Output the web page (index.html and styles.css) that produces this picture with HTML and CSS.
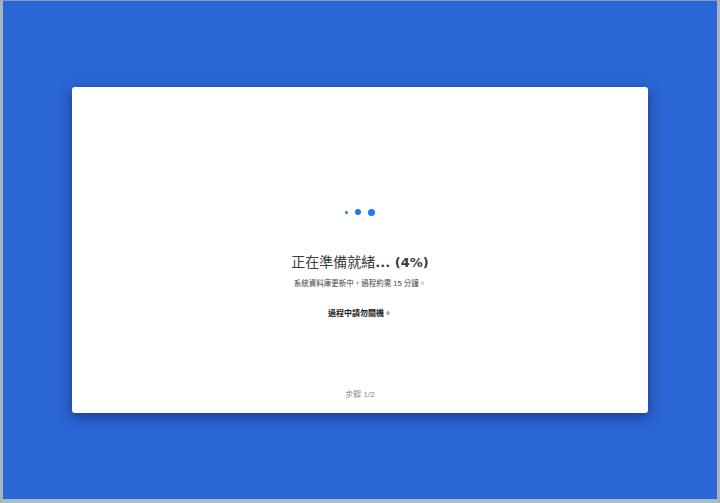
FILE: index.html
```html
<!DOCTYPE html>
<html lang="zh-Hant">
<head>
    <meta charset="UTF-8">
    <meta name="viewport" content="width=device-width, initial-scale=1.0">
    <title>正在準備就緒</title>
    <link rel="stylesheet" href="styles.css">
</head>
<body>

<div class="frame">
    <div class="card">
        <div class="dots">
            <span class="dot dot-sm"></span>
            <span class="dot dot-md"></span>
            <span class="dot dot-lg"></span>
        </div>
        <h1 class="title">正在準備就緒<b>... (4%)</b></h1>
        <p class="desc">系統資料庫更新中，過程約需 15 分鐘。</p>
        <p class="warn">過程中請勿關機。</p>
        <p class="step">步驟 1/2</p>
    </div>
</div>

</body>
</html>
```

FILE: styles.css
```css
html, body {
    margin: 0;
    height: 100%;
}
body {
    font-family: "Liberation Sans", "Noto Sans CJK TC", sans-serif;
    background: #9aa6b4;
}
.frame {
    box-sizing: border-box;
    height: 100%;
    background: #2b66d6;
    border-top: 1px solid #8e9bb0;
    border-left: 3px solid #a9b4c2;
    border-right: 3px solid #a9b4c2;
    border-bottom: 4px solid #a9bccc;
    display: flex;
    align-items: center;
    justify-content: center;
}
.card {
    box-sizing: border-box;
    width: 576px;
    height: 326px;
    background: #fff;
    border-radius: 3px;
    box-shadow: 0 4px 14px rgba(0, 0, 40, 0.45);
    display: flex;
    flex-direction: column;
    align-items: center;
    padding-top: 121px;
    padding-bottom: 12px;
    color: #333;
}
.dots {
    display: flex;
    align-items: center;
    gap: 7px;
    height: 8px;
}
.dot {
    display: block;
    border-radius: 50%;
    background: #1a7be6;
}
.dot-sm {
    width: 3px;
    height: 3px;
}
.dot-md {
    width: 6px;
    height: 6px;
}
.dot-lg {
    width: 7px;
    height: 7px;
}
.title {
    margin: 37px 0 0;
    font-family: "Liberation Serif", "Noto Sans CJK TC", serif;
    font-size: 14px;
    font-weight: normal;
    line-height: 20px;
    color: #3b3b3b;
}
.title b {
    font-family: "DejaVu Sans", sans-serif;
    font-weight: bold;
    font-size: 13px;
}
.desc {
    margin: 5px 0 0;
    font-size: 7.5px;
    line-height: 12px;
    color: #444;
}
.warn {
    margin: 18px 0 0;
    font-size: 8px;
    font-weight: bold;
    line-height: 12px;
    color: #222;
}
.step {
    margin: auto 0 0;
    font-size: 8px;
    line-height: 12px;
    color: #888;
}
```
